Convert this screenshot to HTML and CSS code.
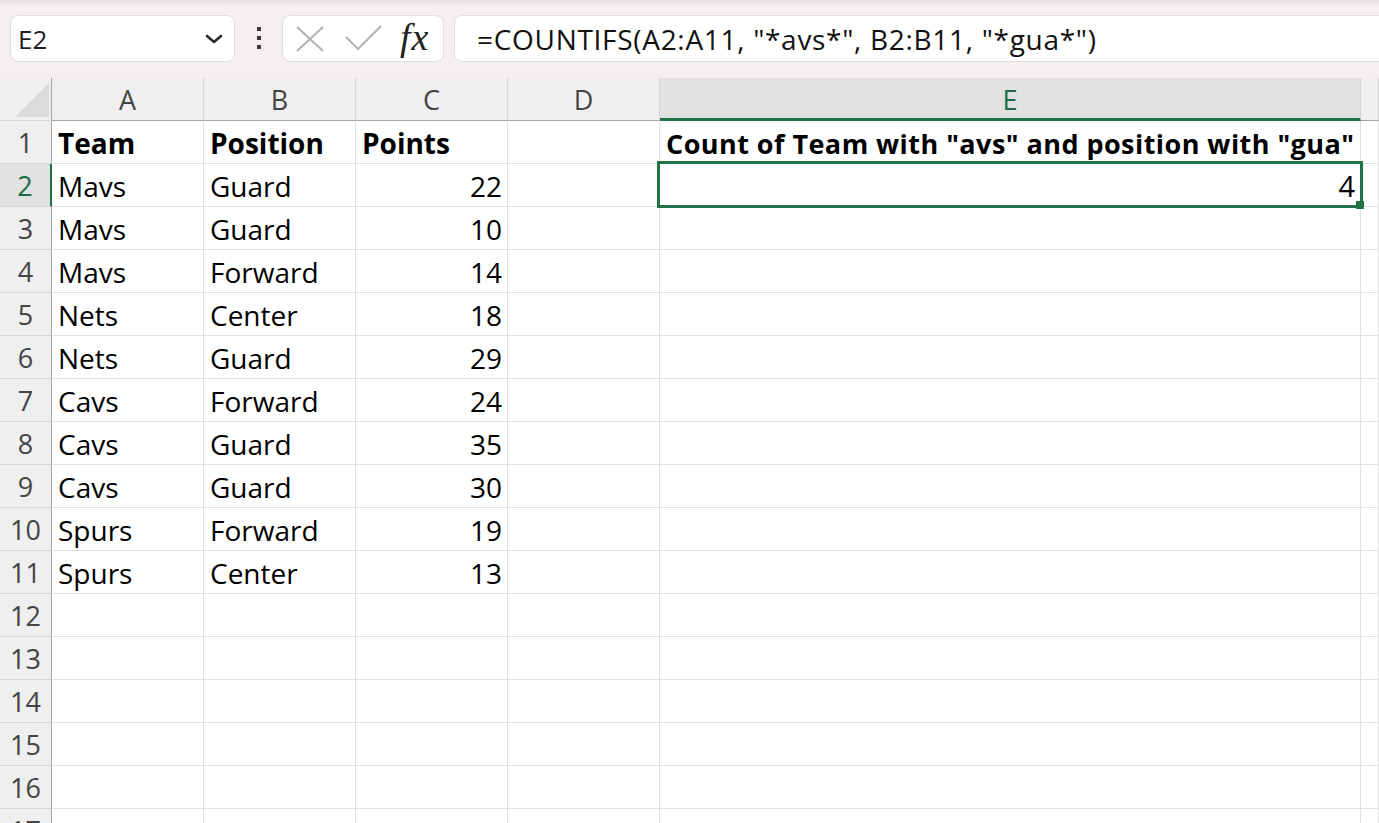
FILE: index.html
```html
<!DOCTYPE html>
<html>
<head>
<meta charset="utf-8">
<link rel="stylesheet" href="styles.css">
</head>
<body>
<div class="toolbar">
  <div class="namebox">
    <span class="cellref">E2</span>
    <svg class="chev" width="18" height="10" viewBox="0 0 18 10"><path d="M2 2 L9 8 L16 2" fill="none" stroke="#2b2b2b" stroke-width="2.6" stroke-linecap="round" stroke-linejoin="round"/></svg>
  </div>
  <div class="dots"><span></span><span></span><span></span></div>
  <div class="fxbox">
    <svg class="ico-x" width="28" height="26" viewBox="0 0 28 26"><path d="M1 1 L27 25 M27 1 L1 25" stroke="#b5b5b5" stroke-width="2.2" fill="none"/></svg>
    <svg class="ico-check" width="37" height="26" viewBox="0 0 37 26"><path d="M1 12 L13 24 L36 1" stroke="#b5b5b5" stroke-width="2.2" fill="none"/></svg>
    <span class="fx">fx</span>
  </div>
  <div class="formula"><span class="ftext">=COUNTIFS(A2:A11, "*avs*", B2:B11, "*gua*")</span></div>
</div>

<div class="sheet">
  <div class="row head">
    <div class="c rh corner"><svg width="34" height="34" viewBox="0 0 34 34"><path d="M0 34 L34 0 L34 34 Z" fill="#dcdcdc"/></svg></div>
    <div class="c ca">A</div>
    <div class="c cb">B</div>
    <div class="c cc">C</div>
    <div class="c cd">D</div>
    <div class="c ce sel">E</div>
    <div class="c cf"></div>
  </div>
  <div class="row">
    <div class="c rh">1</div>
    <div class="c ca bold">Team</div>
    <div class="c cb bold">Position</div>
    <div class="c cc bold">Points</div>
    <div class="c cd"></div>
    <div class="c ce"><span class="etitle">Count of Team with "avs" and position with "gua"</span></div>
    <div class="c cf"></div>
  </div>
  <div class="row">
    <div class="c rh selrow">2</div>
    <div class="c ca">Mavs</div>
    <div class="c cb">Guard</div>
    <div class="c cc num">22</div>
    <div class="c cd"></div>
    <div class="c ce num active"><span class="result">4</span><div class="selbox"><div class="handle"></div></div></div>
    <div class="c cf"></div>
  </div>
  <div class="row">
    <div class="c rh">3</div>
    <div class="c ca">Mavs</div>
    <div class="c cb">Guard</div>
    <div class="c cc num">10</div>
    <div class="c cd"></div>
    <div class="c ce"></div>
    <div class="c cf"></div>
  </div>
  <div class="row">
    <div class="c rh">4</div>
    <div class="c ca">Mavs</div>
    <div class="c cb">Forward</div>
    <div class="c cc num">14</div>
    <div class="c cd"></div>
    <div class="c ce"></div>
    <div class="c cf"></div>
  </div>
  <div class="row">
    <div class="c rh">5</div>
    <div class="c ca">Nets</div>
    <div class="c cb">Center</div>
    <div class="c cc num">18</div>
    <div class="c cd"></div>
    <div class="c ce"></div>
    <div class="c cf"></div>
  </div>
  <div class="row">
    <div class="c rh">6</div>
    <div class="c ca">Nets</div>
    <div class="c cb">Guard</div>
    <div class="c cc num">29</div>
    <div class="c cd"></div>
    <div class="c ce"></div>
    <div class="c cf"></div>
  </div>
  <div class="row">
    <div class="c rh">7</div>
    <div class="c ca">Cavs</div>
    <div class="c cb">Forward</div>
    <div class="c cc num">24</div>
    <div class="c cd"></div>
    <div class="c ce"></div>
    <div class="c cf"></div>
  </div>
  <div class="row">
    <div class="c rh">8</div>
    <div class="c ca">Cavs</div>
    <div class="c cb">Guard</div>
    <div class="c cc num">35</div>
    <div class="c cd"></div>
    <div class="c ce"></div>
    <div class="c cf"></div>
  </div>
  <div class="row">
    <div class="c rh">9</div>
    <div class="c ca">Cavs</div>
    <div class="c cb">Guard</div>
    <div class="c cc num">30</div>
    <div class="c cd"></div>
    <div class="c ce"></div>
    <div class="c cf"></div>
  </div>
  <div class="row">
    <div class="c rh">10</div>
    <div class="c ca">Spurs</div>
    <div class="c cb">Forward</div>
    <div class="c cc num">19</div>
    <div class="c cd"></div>
    <div class="c ce"></div>
    <div class="c cf"></div>
  </div>
  <div class="row">
    <div class="c rh">11</div>
    <div class="c ca">Spurs</div>
    <div class="c cb">Center</div>
    <div class="c cc num">13</div>
    <div class="c cd"></div>
    <div class="c ce"></div>
    <div class="c cf"></div>
  </div>
  <div class="row">
    <div class="c rh">12</div>
    <div class="c ca"></div><div class="c cb"></div><div class="c cc"></div><div class="c cd"></div><div class="c ce"></div><div class="c cf"></div>
  </div>
  <div class="row">
    <div class="c rh">13</div>
    <div class="c ca"></div><div class="c cb"></div><div class="c cc"></div><div class="c cd"></div><div class="c ce"></div><div class="c cf"></div>
  </div>
  <div class="row">
    <div class="c rh">14</div>
    <div class="c ca"></div><div class="c cb"></div><div class="c cc"></div><div class="c cd"></div><div class="c ce"></div><div class="c cf"></div>
  </div>
  <div class="row">
    <div class="c rh">15</div>
    <div class="c ca"></div><div class="c cb"></div><div class="c cc"></div><div class="c cd"></div><div class="c ce"></div><div class="c cf"></div>
  </div>
  <div class="row">
    <div class="c rh">16</div>
    <div class="c ca"></div><div class="c cb"></div><div class="c cc"></div><div class="c cd"></div><div class="c ce"></div><div class="c cf"></div>
  </div>
  <div class="row">
    <div class="c rh">17</div>
    <div class="c ca"></div><div class="c cb"></div><div class="c cc"></div><div class="c cd"></div><div class="c ce"></div><div class="c cf"></div>
  </div>
</div>
</body>
</html>
```

FILE: styles.css
```css
* { box-sizing: border-box; }
html, body { margin: 0; height: 100%; overflow: hidden; background: #fff; }
body { font-family: "Open Sans", "Liberation Sans", sans-serif; color: #000; }

.toolbar {
  height: 78px;
  background: linear-gradient(#e6e2e1 0, #f3f0ef 7px, #f3f0ef 100%);
  display: flex;
  align-items: flex-start;
  padding: 15px 0 0 10px;
}
.namebox {
  width: 225px;
  height: 47px;
  background: #fff;
  border: 1px solid #e2dedd;
  border-radius: 8px;
  display: flex;
  align-items: center;
  justify-content: space-between;
  padding: 0 11px 0 7px;
}
.cellref { font-size: 26px; color: #1f1f1f; }
.dots {
  width: 47px;
  height: 47px;
  display: flex;
  flex-direction: column;
  align-items: center;
  gap: 5px;
  padding-top: 12px;
}
.dots span { width: 4px; height: 4px; background: #3a3a3a; }
.fxbox {
  width: 162px;
  height: 47px;
  background: #fff;
  border: 1px solid #e2dedd;
  border-radius: 8px;
  display: flex;
  align-items: center;
  padding-left: 13px;
}
.ico-x { margin-right: 21px; }
.ico-check { margin-right: 18px; margin-top: -2px; }
.fx {
  font-family: "Liberation Serif", "DejaVu Serif", serif;
  font-style: italic;
  font-size: 38px;
  color: #222;
  line-height: 1;
  margin-top: -4px;
  letter-spacing: 1px;
}
.formula {
  flex: 1;
  margin-left: 10px;
  margin-right: -20px;
  height: 47px;
  background: #fff;
  border: 1px solid #e2dedd;
  border-radius: 8px;
  display: flex;
  align-items: center;
  padding-left: 22px;
}
.ftext { font-size: 28px; color: #111; letter-spacing: 0.7px; }

.sheet { display: flex; flex-direction: column; }
.row { display: flex; height: 43px; }
.c {
  height: 43px;
  border-right: 1px solid #e1e1e1;
  border-bottom: 1px solid #e1e1e1;
  font-size: 28px;
  line-height: 40px;
  padding: 2px 5px 0 6px;
  white-space: nowrap;
  flex: none;
}
.rh { width: 52px; }
.ca, .cb, .cc, .cd { width: 152px; }
.ce { width: 701px; }
.cf { flex: 1; }

.head .c {
  background: #efefef;
  border-right-color: #d6d6d6;
  border-bottom: 1px solid #a6a6a6;
  color: #454545;
  text-align: center;
  font-size: 27px;
  padding: 2px 0 0 0;
}
.head .corner { border-right-color: #efefef; position: relative; }
.corner svg { position: absolute; left: 15px; bottom: 3px; }
.head .sel {
  background: #e1e1e1;
  color: #1e6b41;
  border-bottom: 3px solid #217346;
}

.row .rh {
  background: #efefef;
  color: #454545;
  border-right: 1px solid #a6a6a6;
  border-bottom-color: #d6d6d6;
  text-align: center;
  font-size: 27px;
  padding: 2px 0 0 0;
}
.row .rh.selrow {
  background: #e1e1e1;
  color: #1e6b41;
  border-right: 2px solid #217346;
}

.bold { font-weight: 700; }
.num { text-align: right; }
.etitle { font-weight: 700; font-size: 27px; letter-spacing: 0.45px; }
.result { font-size: 29px; }
.active { position: relative; }
.selbox {
  position: absolute;
  top: -3px;
  left: -3px;
  right: -3px;
  bottom: -2px;
  border: 3px solid #217346;
}
.handle {
  position: absolute;
  right: -4px;
  bottom: -4px;
  width: 8px;
  height: 8px;
  background: #217346;
}
```
